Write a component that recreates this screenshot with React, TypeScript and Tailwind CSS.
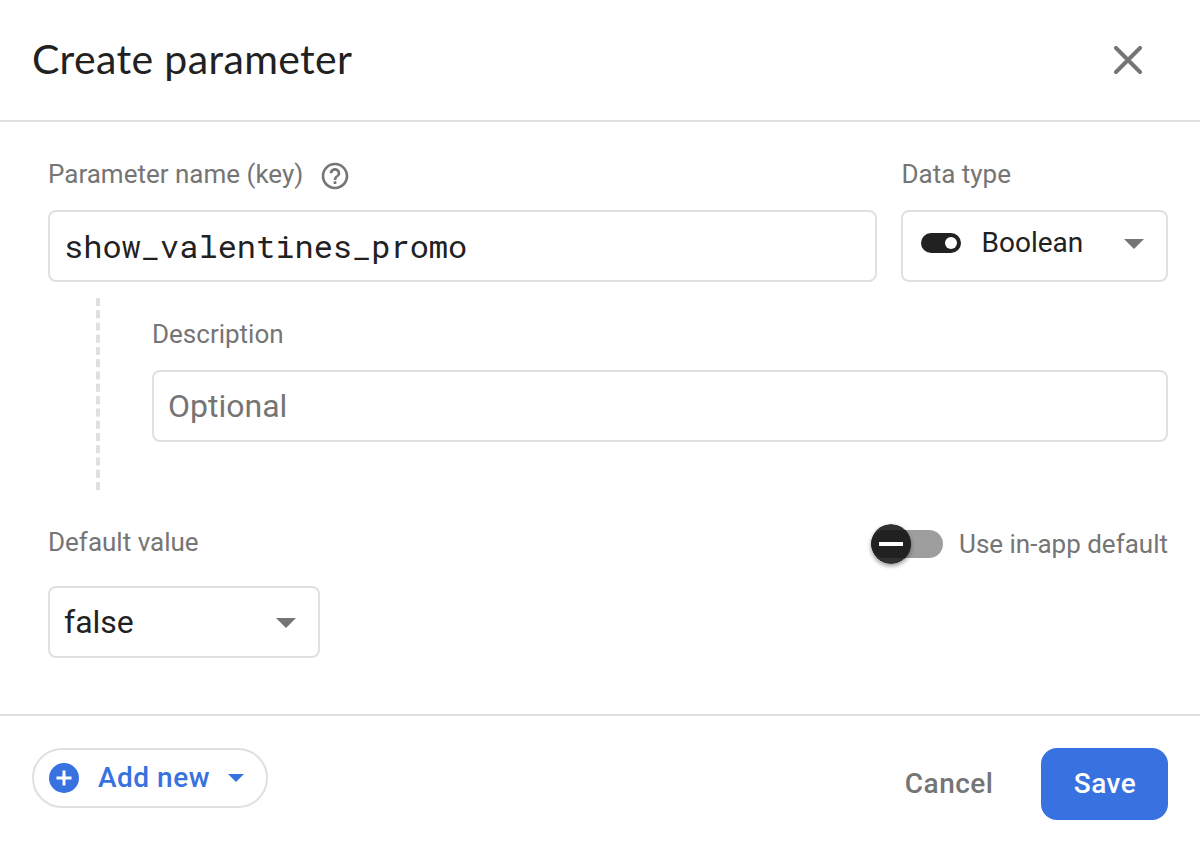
import React from "react";

const label = "whitespace-nowrap text-[26px] leading-8 text-[#757575]";

function Caret({ className }: { className: string }) {
  return (
    <svg className={className} viewBox="0 0 20 10" fill="currentColor">
      <path d="M0 0h20L10 10z" />
    </svg>
  );
}

export default function App() {
  return (
    <div className="flex h-[854px] w-[1200px] flex-col overflow-hidden bg-white font-['Roboto',sans-serif] text-[#212121]">
      <header className="flex h-[122px] shrink-0 items-center justify-between border-b-2 border-[#e0e0e0] pl-8 pr-[58px]">
        <h1 className="whitespace-nowrap pb-0.5 font-['Lato',sans-serif] text-[41px] leading-[48px] tracking-[0.36px]">Create parameter</h1>
        <svg className="h-7 w-7 text-[#757575]" viewBox="0 0 28 28" fill="none" stroke="currentColor" strokeWidth="4" strokeLinecap="round">
          <path d="M2 2 26 26M26 2 2 26" />
        </svg>
      </header>

      <main className="flex h-[592px] shrink-0 flex-col pl-12 pr-8 pt-9">
        <div className="flex gap-6">
          <div className="w-[829px]">
            <div className="flex h-8 items-center gap-4">
              <span className={label}>Parameter name (key)</span>
              <svg className="mt-1 h-8 w-8 text-[#757575]" viewBox="0 0 24 24" fill="currentColor">
                <path d="M11 18h2v-2h-2v2zm1-16C6.48 2 2 6.48 2 12s4.48 10 10 10 10-4.48 10-10S17.52 2 12 2zm0 18c-4.41 0-8-3.59-8-8s3.59-8 8-8 8 3.59 8 8-3.59 8-8 8zm0-14c-2.21 0-4 1.79-4 4h2c0-1.1.9-2 2-2s2 .9 2 2c0 2-3 1.75-3 5h2c0-2.25 3-2.5 3-5 0-2.21-1.79-4-4-4z" />
              </svg>
            </div>
            <div className="mt-5 flex h-[72px] items-center rounded-lg border-2 border-[#e0e0e0] pl-3.5 font-['Roboto_Mono','DejaVu_Sans_Mono',monospace] text-[32px]">
              show_valentines_promo
            </div>
          </div>
          <div className="w-[267px]">
            <div className={`${label} pl-[0.5px]`}>Data type</div>
            <div className="mt-5 flex h-[72px] items-center rounded-lg border-2 border-[#e0e0e0] pb-[7px] pl-[18px] pr-[22px]">
              <svg className="h-5 w-10" viewBox="0 0 40 20">
                <rect width="40" height="20" rx="10" fill="#212121" />
                <circle cx="30" cy="10" r="6" fill="white" />
              </svg>
              <span className="ml-[20.5px] text-[28px]">Boolean</span>
              <Caret className="ml-auto mt-0.5 h-2.5 w-5 text-[#757575]" />
            </div>
          </div>
        </div>

        <div className="mt-4 flex h-48 pl-12">
          <svg className="h-48 w-1" viewBox="0 0 4 192">
            <path d="M2 0v192" stroke="#e0e0e0" strokeWidth="4" strokeDasharray="8 4.267" />
          </svg>
          <div className="ml-[52px] flex-1 pt-5">
            <div className={label}>Description</div>
            <div className="mt-5 flex h-[72px] items-center rounded-lg border-2 border-[#e0e0e0] pl-3.5 text-[32px] text-[#757575]">Optional</div>
          </div>
        </div>

        <div className="mt-8 flex items-start justify-between">
          <div>
            <div className="flex h-10 items-center"><span className={label}>Default value</span></div>
            <div className="mt-6 flex h-[72px] w-[272px] items-center justify-between rounded-lg border-2 border-[#e0e0e0] pl-3.5 pr-[22px] text-[32px]">
              false
              <Caret className="mt-0.5 h-2.5 w-5 text-[#757575]" />
            </div>
          </div>
          <div className="flex h-11 items-center">
            <div className="flex h-7 w-[72px] items-center rounded-full bg-[#9e9e9e]">
              <svg className="h-10 w-10 shrink-0 rounded-full shadow-[0_2px_4px_rgba(0,0,0,0.4)]" viewBox="0 0 40 40">
                <circle cx="20" cy="20" r="20" fill="#303030" />
                <path d="M40 6H14a14 14 0 0 0 0 28h26z" fill="#212121" />
                <path d="M8 18h24v4H8z" fill="white" />
              </svg>
            </div>
            <span className={`${label} ml-4`}>Use in-app default</span>
          </div>
        </div>
      </main>

      <footer className="flex h-[140px] shrink-0 items-start border-t-2 border-[#e0e0e0] px-8 pt-8 font-medium">
        <button className="flex h-[60px] w-[236px] items-center rounded-full border-2 border-[#e0e0e0] pl-[15px] text-[#3871e0]">
          <svg className="h-[30px] w-[30px]" viewBox="0 0 30 30">
            <circle cx="15" cy="15" r="15" fill="currentColor" />
            <path d="M15 7.5v15M7.5 15h15" stroke="white" strokeWidth="3" />
          </svg>
          <span className="ml-[19px] text-[28px] tracking-[0.5px]">Add new</span>
          <Caret className="ml-[18px] h-2 w-4" />
        </button>
        <button className="ml-auto mr-[47.5px] h-[72px] text-[28px] tracking-[0.5px] text-[#757575]">Cancel</button>
        <button className="h-[72px] w-[127px] rounded-2xl bg-[#3871e0] pl-px text-[28px] tracking-[0.5px] text-white">Save</button>
      </footer>
    </div>
  );
}
